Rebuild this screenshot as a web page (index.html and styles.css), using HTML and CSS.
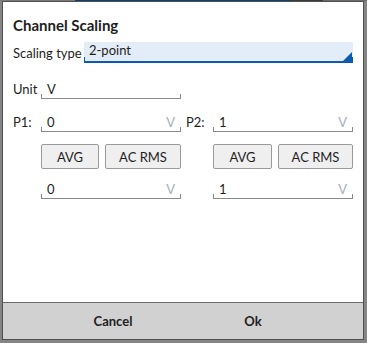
FILE: index.html
```html
<!DOCTYPE html>
<html>
<head>
<meta charset="utf-8">
<link rel="stylesheet" href="styles.css">
</head>
<body>
<div class="topstrip"></div>
<div class="dialog">
  <div class="content">
    <div class="title">Channel Scaling</div>
    <div class="row-type">
      <span class="label">Scaling type</span>
      <div class="select">
        <span class="select-text">2-point</span>
        <svg class="tri" width="9" height="9" viewBox="0 0 9 9"><polygon points="0,9 9,0 9,9" fill="#0c5bb0"/></svg>
      </div>
    </div>
    <div class="row-unit">
      <span class="label unit-label">Unit</span>
      <div class="field unit-field"><span class="val">V</span></div>
    </div>
    <div class="points">
      <div class="col">
        <div class="prow">
          <span class="label plabel">P1:</span>
          <div class="field"><span class="val">0</span><span class="suffix">V</span></div>
        </div>
        <div class="btns">
          <button class="btn avg">AVG</button>
          <button class="btn rms">AC RMS</button>
        </div>
        <div class="prow prow2">
          <span class="plabel"></span>
          <div class="field"><span class="val">0</span><span class="suffix">V</span></div>
        </div>
      </div>
      <div class="col">
        <div class="prow">
          <span class="label plabel">P2:</span>
          <div class="field"><span class="val">1</span><span class="suffix">V</span></div>
        </div>
        <div class="btns">
          <button class="btn avg">AVG</button>
          <button class="btn rms">AC RMS</button>
        </div>
        <div class="prow prow2">
          <span class="plabel"></span>
          <div class="field"><span class="val">1</span><span class="suffix">V</span></div>
        </div>
      </div>
    </div>
  </div>
  <div class="footer">
    <button class="fbtn">Cancel</button>
    <button class="fbtn">Ok</button>
  </div>
</div>
</body>
</html>
```
FILE: styles.css
```css
html, body {
  margin: 0;
  padding: 0;
}
body {
  width: 367px;
  height: 343px;
  background: #858585;
  font-family: Lato, "Liberation Sans", sans-serif;
  color: #1e1e1e;
  overflow: hidden;
}
.topstrip {
  height: 1px;
  background: linear-gradient(to right, #7a7a7a 0, #7a7a7a 75px, #0d3f78 75px, #0d3f78 290px, #3a3a3a 290px, #3a3a3a 323px, #6a6a6a 323px);
}
.dialog {
  margin-left: 2px;
  width: 362px;
  height: 339px;
  box-sizing: border-box;
  border: 1px solid #505050;
  background: #fff;
  display: flex;
  flex-direction: column;
}
.content {
  flex: 1;
  padding: 0 10px 0 10px;
}
.title {
  font-weight: bold;
  font-size: 15px;
  line-height: 18px;
  padding-top: 14px;
  height: 26px;
}
.label {
  font-size: 13px;
}
.row-type {
  display: flex;
  align-items: center;
  height: 21px;
}
.row-type .label {
  width: 71px;
}
.select {
  width: 269px;
  height: 21px;
  box-sizing: border-box;
  background: #e3edf7;
  border-bottom: 2px solid #0c5bb0;
  display: flex;
  align-items: flex-end;
  padding-left: 5px;
  background-image: linear-gradient(#0c5bb0, #0c5bb0), linear-gradient(#0c5bb0, #0c5bb0);
  background-size: 1px 4px, 1px 4px;
  background-position: left bottom, right bottom;
  background-repeat: no-repeat;
}
.select-text {
  font-size: 13px;
  line-height: 19px;
  align-self: flex-start;
  margin-top: -1px;
}
.tri {
  margin-left: auto;
  margin-right: 1px;
  display: block;
}
.row-unit {
  display: flex;
  align-items: flex-end;
  margin-top: 16px;
  height: 20px;
}
.unit-label {
  width: 28px;
  line-height: 18px;
  padding-bottom: 1px;
}
.field {
  height: 20px;
  box-sizing: border-box;
  border-bottom: 1px solid #8a8a8a;
  background-image: linear-gradient(#8a8a8a, #8a8a8a), linear-gradient(#8a8a8a, #8a8a8a);
  background-size: 1px 4px, 1px 4px;
  background-position: left bottom, right bottom;
  background-repeat: no-repeat;
  display: flex;
  align-items: center;
  padding: 0 6px 0 6px;
  font-size: 13px;
}
.unit-field {
  width: 140px;
}
.val {
  flex: 1;
}
.suffix {
  color: #a7aebd;
}
.points {
  display: flex;
  margin-top: 13px;
}
.col {
  display: flex;
  flex-direction: column;
}
.col + .col {
  margin-left: 5px;
}
.prow {
  display: flex;
  align-items: center;
}
.plabel {
  width: 28px;
  display: block;
}
.col + .col .plabel {
  width: 27px;
}
.prow .field {
  width: 140px;
}
.btns {
  display: flex;
  gap: 6px;
  margin-top: 12px;
  margin-left: 28px;
}
.col + .col .btns {
  margin-left: 27px;
}
.btn {
  font-family: Lato, "Liberation Sans", sans-serif;
  font-size: 13px;
  color: #1e1e1e;
  height: 25px;
  box-sizing: border-box;
  background: #efefef;
  border: 1px solid #9a9a9a;
  border-radius: 2px;
  padding: 0;
  margin: 0;
}
.btn.avg {
  width: 58px;
}
.btn.rms {
  width: 76px;
}
.col + .col .btn.avg {
  width: 59px;
}
.col + .col .btn.rms {
  width: 75px;
}
.prow2 {
  margin-top: 10px;
}
.footer {
  height: 36px;
  border-top: 1px solid #6a6a6a;
  background: #d1d1d1;
  display: flex;
  justify-content: center;
}
.fbtn {
  width: 140px;
  background: transparent;
  border: none;
  padding: 0;
  margin: 0;
  font-family: Lato, "Liberation Sans", sans-serif;
  font-weight: bold;
  font-size: 13px;
  color: #1e1e1e;
}
```
